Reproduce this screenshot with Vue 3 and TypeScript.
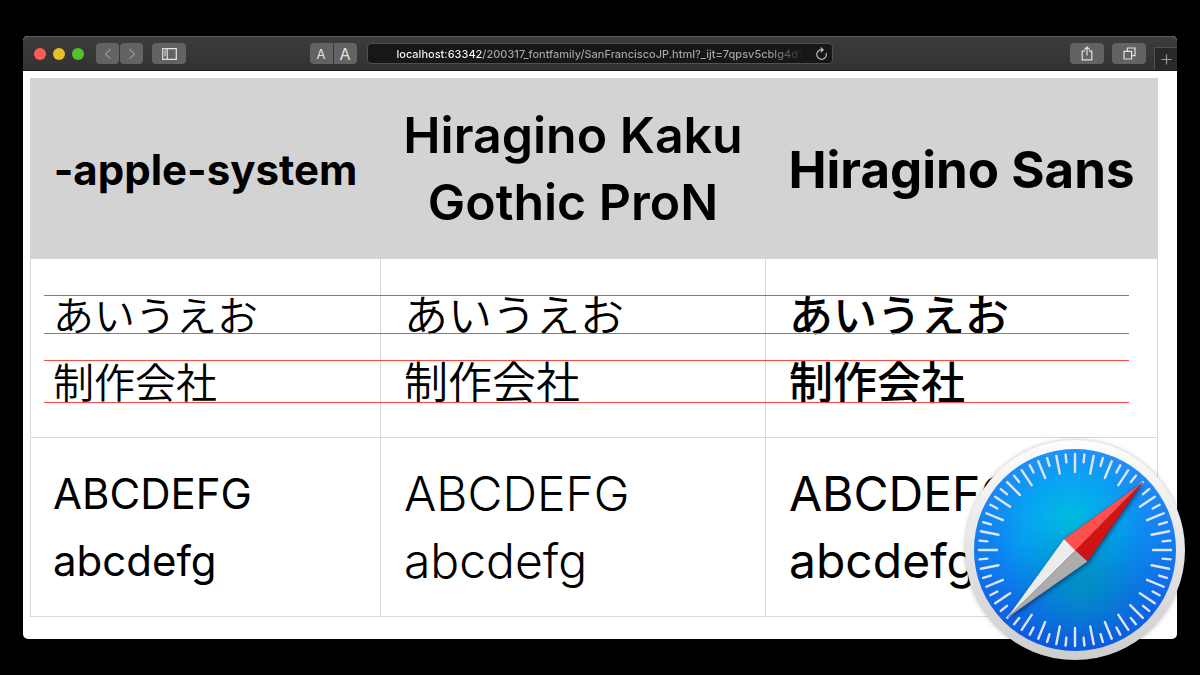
<script setup lang="ts">
import { ref } from 'vue'

interface FontSample {
  name: string
  kind: 'system' | 'kaku' | 'sans'
}

const fonts: FontSample[] = [
  { name: '-apple-system', kind: 'system' },
  { name: 'Hiragino Kaku Gothic ProN', kind: 'kaku' },
  { name: 'Hiragino Sans', kind: 'sans' },
]

const japanese: string[] = ['あいうえお', '制作会社']
const latin: string[] = ['ABCDEFG', 'abcdefg']

const address = ref('localhost:63342/200317_fontfamily/SanFranciscoJP.html?_ijt=7qpsv5cblg4d1r')

const ticks = Array.from({ length: 64 }, (_, i) => ({
  angle: i * 5.625,
  inner: i % 2 === 0 ? -78 : -88,
}))
</script>

<template>
  <main class="desktop">
    <div class="window">
      <header class="toolbar">
        <div class="lights">
          <button class="light close" aria-label="Close"></button>
          <button class="light minimize" aria-label="Minimize"></button>
          <button class="light expand" aria-label="Full screen"></button>
        </div>
        <div class="history">
          <button class="tool narrow dim" aria-label="Back">
            <svg width="8" height="12" viewBox="0 0 8 12"><path d="M6.5 1 1.5 6l5 5" /></svg>
          </button>
          <button class="tool narrow dim" aria-label="Forward">
            <svg width="8" height="12" viewBox="0 0 8 12"><path d="m1.5 1 5 5-5 5" /></svg>
          </button>
        </div>
        <button class="tool" aria-label="Sidebar">
          <svg width="15" height="12" viewBox="0 0 15 12">
            <path d="M.7.7h13.6v10.6H.7zM5.2.7v10.6M2 3h2M2 5h2M2 7h2" />
          </svg>
        </button>
        <div class="center">
          <div class="zoomers">
            <button class="tool letter small">A</button>
            <button class="tool letter">A</button>
          </div>
          <div class="address">
            <input v-model="address" class="url" type="text" aria-label="Address" spellcheck="false" />
            <button class="reload" aria-label="Reload">
              <svg width="13" height="14" viewBox="0 0 13 14">
                <path d="M11.2 6.2a4.8 4.8 0 1 1-4.7-3.5h1.2M5.8.6l2.3 2.1-2.3 2.3" />
              </svg>
            </button>
          </div>
        </div>
        <div class="actions">
          <button class="tool" aria-label="Share">
            <svg width="12" height="15" viewBox="0 0 12 15">
              <path d="M4 5.2H1.2v8.6h9.6V5.2H8M6 9.5V1.2M3.4 3.6 6 1l2.6 2.6" />
            </svg>
          </button>
          <button class="tool" aria-label="Tab overview">
            <svg width="13" height="13" viewBox="0 0 13 13">
              <path d="M1 4.4h7.6V12H1zM4.4 4.2V1H12v7.6H8.8" />
            </svg>
          </button>
        </div>
        <button class="newtab" aria-label="New tab">
          <svg width="11" height="11" viewBox="0 0 11 11"><path d="M5.5.5v10M.5 5.5h10" /></svg>
        </button>
      </header>

      <section class="page">
        <table class="samples">
          <thead>
            <tr>
              <th v-for="font in fonts" :key="font.kind" :class="font.kind" scope="col">{{ font.name }}</th>
            </tr>
          </thead>
          <tbody>
            <tr>
              <td v-for="font in fonts" :key="font.kind" :class="[font.kind, 'ja']" lang="ja">
                <div v-for="line in japanese" :key="line">{{ line }}</div>
              </td>
            </tr>
            <tr>
              <td v-for="font in fonts" :key="font.kind" :class="font.kind">
                <div v-for="line in latin" :key="line">{{ line }}</div>
              </td>
            </tr>
          </tbody>
        </table>
        <div class="guide kana"></div>
        <div class="guide kanji"></div>
      </section>

      <svg class="compass" viewBox="-110 -110 220 220" role="img" aria-label="Safari">
        <defs>
          <linearGradient id="rim" x1="0" y1="0" x2="0" y2="1">
            <stop offset="0" stop-color="#fdfdfd" />
            <stop offset="1" stop-color="#cdcdcf" />
          </linearGradient>
          <linearGradient id="face" x1="0" y1="0" x2="0" y2="1">
            <stop offset="0" stop-color="#3a90ff" />
            <stop offset="0.5" stop-color="#1478ee" />
            <stop offset="1" stop-color="#0d55e0" />
          </linearGradient>
          <radialGradient id="glow" cx="0.48" cy="0.38" r="0.56">
            <stop offset="0" stop-color="#00c3e0" />
            <stop offset="0.45" stop-color="#00a8f0" stop-opacity="0.8" />
            <stop offset="1" stop-color="#0a78ee" stop-opacity="0" />
          </radialGradient>
          <radialGradient id="depth" cx="0.54" cy="0.68" r="0.38">
            <stop offset="0" stop-color="#008fb4" stop-opacity="0.8" />
            <stop offset="1" stop-color="#0078c8" stop-opacity="0" />
          </radialGradient>
        </defs>
        <circle r="110" fill="url(#rim)" />
        <circle r="101" fill="url(#face)" />
        <circle r="101" fill="url(#glow)" />
        <circle r="101" fill="url(#depth)" />
        <g stroke="#dde6f0" stroke-width="2.4" stroke-linecap="round">
          <line v-for="t in ticks" :key="t.angle" x1="0" y1="-96" x2="0" :y2="t.inner" :transform="`rotate(${t.angle})`" />
        </g>
        <path class="needle-shade" d="M68.5-68.5 12.5 11.5-68 68-11-11z" />
        <path d="M68.5-68.5-11-11 .5.5z" fill="#ff5050" />
        <path d="M68.5-68.5 12.5 11.5.5.5z" fill="#d01414" />
        <path d="M-68 68-11-11 .5.5z" fill="#ececec" />
        <path d="M-68 68 12.5 11.5.5.5z" fill="#acacac" />
      </svg>
    </div>
  </main>
</template>

<style>
body {
  margin: 0;
  background: #000;
}
</style>

<style scoped>
.desktop {
  padding: 36px 23px;
  font-family: Inter, "Noto Sans CJK JP", sans-serif;
}

.window {
  position: relative;
  border-radius: 5px;
  background: #fff;
}

.toolbar {
  display: flex;
  align-items: center;
  box-sizing: border-box;
  height: 35px;
  padding-left: 11px;
  border-top: 1px solid #5a5a5a;
  border-bottom: 1px solid #1c1c1c;
  border-radius: 5px 5px 0 0;
  background: linear-gradient(#3c3c3c, #323232);
}

button {
  padding: 0;
  border: 0;
  font-family: inherit;
}

.lights {
  display: flex;
  gap: 7px;
  margin-right: 12px;
}

.light {
  width: 12px;
  height: 12px;
  border-radius: 50%;
}

.close {
  background: #ff5b53;
}

.minimize {
  background: #e6c029;
}

.expand {
  background: #54c22c;
}

.history {
  display: flex;
  gap: 1px;
  margin-right: 9px;
}

.tool {
  display: flex;
  align-items: center;
  justify-content: center;
  width: 34px;
  height: 21px;
  border-radius: 4px;
  background: #636363;
  color: #e2e2e2;
}

.narrow {
  width: 23px;
}

.dim {
  color: #959595;
}

.toolbar svg {
  fill: none;
  stroke: currentColor;
  stroke-width: 1.2;
}

.center {
  display: flex;
  flex: 1;
  justify-content: center;
  gap: 10px;
  margin-right: 114px;
}

.zoomers {
  display: flex;
  gap: 1px;
}

.letter {
  width: 23px;
  font-size: 16px;
}

.small {
  font-size: 13px;
}

.zoomers .small {
  border-radius: 4px 0 0 4px;
}

.zoomers .letter:last-child {
  border-radius: 0 4px 4px 0;
}

.address {
  display: flex;
  align-items: center;
  box-sizing: border-box;
  width: 466px;
  height: 21px;
  padding: 0 3px 0 29px;
  border: 1px solid #505050;
  border-radius: 4px;
  background: #171717;
}

.url {
  flex: 1;
  min-width: 0;
  height: 19px;
  padding: 0;
  border: 0;
  outline: 0;
  background: linear-gradient(90deg, #fff 86px, #a8a8a8 86px, #a8a8a8 370px, #171717 408px);
  background-clip: text;
  color: transparent;
  font: 500 11px Inter, sans-serif;
}

.reload {
  display: flex;
  justify-content: center;
  width: 14px;
  margin-left: 8px;
  background: none;
  color: #c4c4c4;
}

.actions {
  display: flex;
  gap: 8px;
}

.newtab {
  display: flex;
  align-items: center;
  justify-content: center;
  align-self: flex-end;
  width: 23px;
  height: 23px;
  margin-left: 8px;
  border-top: 1px solid #505050;
  border-left: 1px solid #505050;
  background: #282828;
  color: #9a9a9a;
}

.page {
  position: relative;
  padding: 7px 19px 22px 7px;
}

.samples {
  width: 100%;
  border-collapse: collapse;
  table-layout: fixed;
  color: #000;
}

th,
td {
  padding: 22px 23px;
  border: 1px solid #d9d9d9;
  line-height: 67px;
}

th {
  padding: 23px 22px 22px;
  border-color: #d3d3d3;
  background: #d3d3d3;
  font-size: 50px;
}

th.system {
  width: 305px;
  font-size: 42px;
  white-space: nowrap;
}

th.kaku {
  width: 340px;
  font-weight: 600;
}

th.sans {
  font-size: 51px;
  white-space: nowrap;
}

td {
  font-size: 48px;
  font-weight: 400;
  text-align: left;
}

td.kaku {
  font-weight: 300;
}

td.system {
  padding-left: 22px;
  font-size: 42px;
}

td.ja {
  padding-top: 21px;
  padding-bottom: 23px;
  font-family: "Noto Sans CJK JP", sans-serif;
  font-size: 44px;
}

td.system.ja {
  font-size: 41px;
  font-weight: 350;
}

td.kaku.ja {
  font-weight: 350;
}

td.sans.ja {
  font-weight: 500;
}

.guide {
  position: absolute;
  left: 21px;
  right: 48px;
  box-sizing: border-box;
  border-top: 1px solid #ff4a42;
  border-bottom: 1px solid #ff4a42;
}

.kana {
  top: 224px;
  height: 39px;
}

.kanji {
  top: 289px;
  height: 43px;
}

.compass {
  position: absolute;
  right: -8px;
  bottom: -21px;
  width: 220px;
  height: 220px;
  filter: drop-shadow(0 0 2px rgba(0, 0, 0, 0.25));
}

.needle-shade {
  fill: #00305c;
  filter: drop-shadow(1px 2px 2px rgba(0, 30, 80, 0.6));
}
</style>
